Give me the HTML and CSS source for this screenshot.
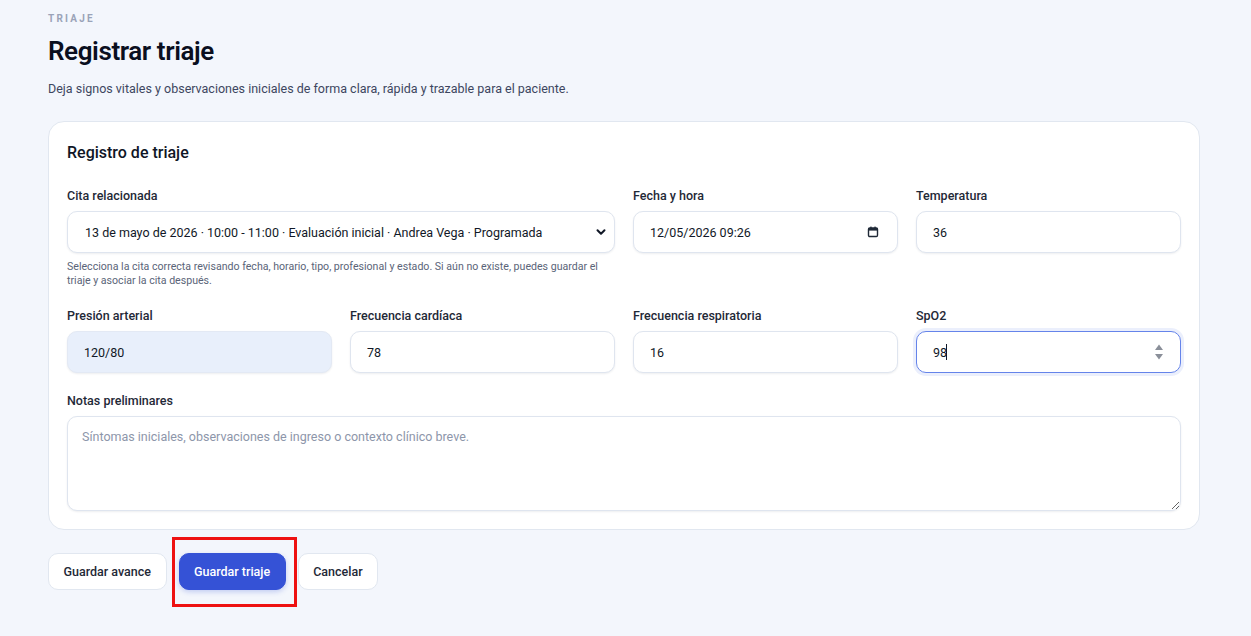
FILE: index.html
```html
<!DOCTYPE html>
<html lang="es">
<head>
    <meta charset="UTF-8">
    <meta name="viewport" content="width=device-width, initial-scale=1.0">
    <title>Registrar triaje</title>
    <link rel="stylesheet" href="styles.css">
</head>
<body>
    <main class="page">
        <header class="page-head">
            <p class="eyebrow">Triaje</p>
            <h1>Registrar triaje</h1>
            <p class="lead">Deja signos vitales y observaciones iniciales de forma clara, rápida y trazable para el paciente.</p>
        </header>

        <section class="card">
            <h2>Registro de triaje</h2>

            <div class="form-grid">
                <div class="field span-2">
                    <label for="cita">Cita relacionada</label>
                    <div class="control">
                        <select id="cita" class="input select">
                            <option>13 de mayo de 2026 · 10:00 - 11:00 · Evaluación inicial · Andrea Vega · Programada</option>
                        </select>
                        <svg class="chevron" width="12" height="12" viewBox="0 0 12 12">
                            <path d="M2.5 4.2 L6 7.8 L9.5 4.2" fill="none" stroke="#111827" stroke-width="2" stroke-linecap="round" stroke-linejoin="round"/>
                        </svg>
                    </div>
                    <p class="hint">Selecciona la cita correcta revisando fecha, horario, tipo, profesional y estado. Si aún no existe, puedes guardar el triaje y asociar la cita después.</p>
                </div>
                <div class="field">
                    <label for="fecha">Fecha y hora</label>
                    <div class="control">
                        <input id="fecha" class="input" type="text" value="12/05/2026 09:26">
                        <svg class="calendar" width="12" height="12" viewBox="0 0 12 12">
                            <rect x="1.5" y="2" width="9" height="8.5" rx="1.2" fill="none" stroke="#1f2937" stroke-width="1.4"/>
                            <rect x="1.5" y="2" width="9" height="2.6" fill="#1f2937"/>
                            <rect x="3.3" y="0.6" width="1.3" height="2" fill="#1f2937"/>
                            <rect x="7.4" y="0.6" width="1.3" height="2" fill="#1f2937"/>
                        </svg>
                    </div>
                </div>
                <div class="field">
                    <label for="temp">Temperatura</label>
                    <input id="temp" class="input" type="text" value="36">
                </div>

                <div class="field">
                    <label for="presion">Presión arterial</label>
                    <input id="presion" class="input filled" type="text" value="120/80">
                </div>
                <div class="field">
                    <label for="fc">Frecuencia cardíaca</label>
                    <input id="fc" class="input" type="text" value="78">
                </div>
                <div class="field">
                    <label for="fr">Frecuencia respiratoria</label>
                    <input id="fr" class="input" type="text" value="16">
                </div>
                <div class="field">
                    <label for="spo2">SpO2</label>
                    <div class="control">
                        <input id="spo2" class="input focused" type="text" value="98">
                        <span class="caret"></span>
                        <svg class="spinner" width="10" height="18" viewBox="0 0 10 18">
                            <path d="M5 1.5 L9 7 L1 7 Z" fill="#8a8f99"/>
                            <path d="M5 16.5 L9 11 L1 11 Z" fill="#8a8f99"/>
                        </svg>
                    </div>
                </div>

                <div class="field span-4">
                    <label for="notas">Notas preliminares</label>
                    <textarea id="notas" class="input textarea" placeholder="Síntomas iniciales, observaciones de ingreso o contexto clínico breve."></textarea>
                </div>
            </div>
        </section>

        <div class="actions">
            <button class="btn">Guardar avance</button>
            <span class="highlight">
                <button class="btn primary">Guardar triaje</button>
            </span>
            <button class="btn">Cancelar</button>
        </div>
    </main>
</body>
</html>
```

FILE: styles.css
```css
* {
    box-sizing: border-box;
}
body {
    margin: 0;
    background: #f3f6fc;
    font-family: Roboto, "Noto Sans", sans-serif;
    color: #111827;
}
.page {
    padding: 12px 51px 40px 48px;
}
.eyebrow {
    margin: 0;
    font-size: 10px;
    line-height: 14px;
    font-weight: 700;
    letter-spacing: 2.2px;
    text-transform: uppercase;
    color: #9aa3b8;
}
h1 {
    margin: 8px 0 0;
    font-size: 26px;
    line-height: 34px;
    font-weight: 600;
    letter-spacing: -0.4px;
    color: #0a0f1f;
}
.lead {
    margin: 12px 0 0;
    font-size: 12.5px;
    line-height: 18px;
    color: #3d4660;
}
.card {
    margin-top: 23px;
    background: #fff;
    border: 1px solid #e1e7f0;
    border-radius: 16px;
    padding: 20px 18px 18px;
}
.card h2 {
    margin: 0;
    font-size: 16px;
    line-height: 22px;
    font-weight: 500;
    color: #0f1626;
}
.form-grid {
    display: grid;
    grid-template-columns: repeat(4, 1fr);
    column-gap: 18px;
    row-gap: 20px;
    margin-top: 24px;
}
.span-2 {
    grid-column: span 2;
}
.span-4 {
    grid-column: span 4;
}
.field label {
    display: block;
    font-size: 12.5px;
    line-height: 16px;
    font-weight: 500;
    color: #1f2937;
    margin-bottom: 7px;
}
.control {
    position: relative;
}
.input {
    display: block;
    width: 100%;
    height: 42px;
    padding: 0 16px;
    font-family: inherit;
    font-size: 12.5px;
    color: #111827;
    background: #fff;
    border: 1px solid #dfe5ef;
    border-radius: 10px;
    box-shadow: 0 1px 2px rgba(30, 41, 59, 0.08);
    outline: none;
}
.select {
    appearance: none;
    padding-left: 17px;
}
.chevron {
    position: absolute;
    right: 8px;
    top: 15px;
}
.calendar {
    position: absolute;
    right: 19px;
    top: 15px;
}
.filled {
    background: #e8effb;
    border-color: #e3e9f4;
}
.focused {
    border-color: #6584ea;
    box-shadow: 0 0 0 3px rgba(90, 122, 230, 0.12);
}
.caret {
    position: absolute;
    left: 30px;
    top: 13px;
    width: 1px;
    height: 16px;
    background: #111827;
}
.spinner {
    position: absolute;
    right: 17px;
    top: 12px;
}
.hint {
    margin: 7px 0 0;
    font-size: 10.6px;
    line-height: 14px;
    color: #5a6478;
}
.textarea {
    height: 95px;
    padding: 12px 14px;
    resize: vertical;
}
.textarea::placeholder {
    color: #8d96aa;
}
.actions {
    display: flex;
    align-items: center;
    gap: 12px;
    margin-top: 23px;
}
.btn {
    height: 37px;
    padding: 0 14.5px;
    font-family: inherit;
    font-size: 12.5px;
    font-weight: 500;
    color: #1f2937;
    background: #fff;
    border: 1px solid #e1e7f0;
    border-radius: 10px;
    cursor: pointer;
}
.btn.primary {
    background: #3552d6;
    border-color: #3552d6;
    color: #fff;
    box-shadow: 0 2px 5px rgba(53, 82, 214, 0.25);
}
.highlight {
    position: relative;
    display: inline-block;
}
.highlight::after {
    content: "";
    position: absolute;
    left: -7px;
    right: -11px;
    top: -16px;
    bottom: -17px;
    border: 3px solid #ee1111;
    pointer-events: none;
}
```
